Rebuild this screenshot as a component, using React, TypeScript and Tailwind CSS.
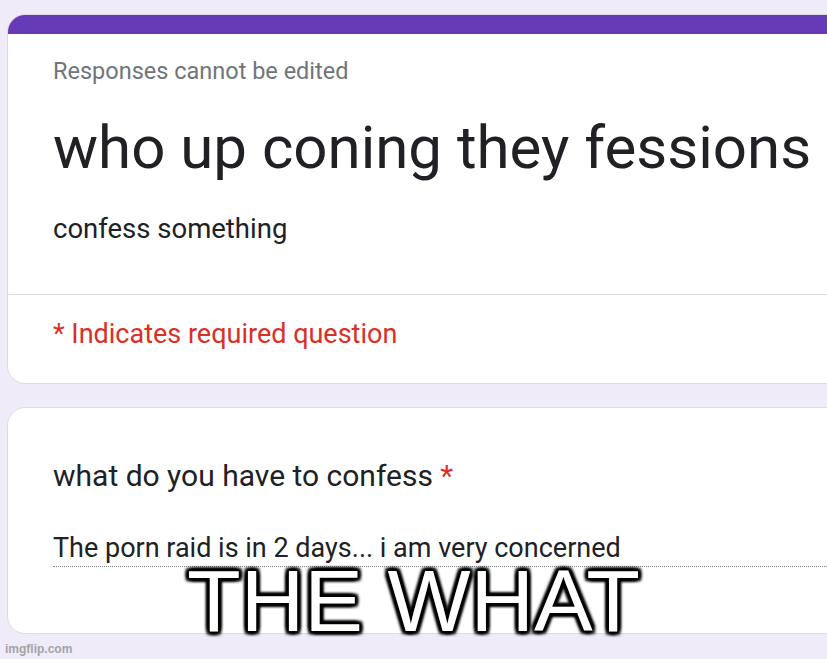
export default function App() {
  return (
    <div className="relative h-[659px] w-[827px] overflow-hidden bg-[#f0ebf8] font-['Roboto',sans-serif]">
      <div className="flex w-[860px] flex-col gap-[23px] pl-[7px] pt-[14px]">
        <div className="flex h-[370px] flex-col overflow-hidden rounded-[18px] border border-[#dadce0] bg-white">
          <div className="h-[19px] shrink-0 bg-[#673ab7]" />
          <div className="px-[45px] pt-[23px]">
            <p className="text-[23.5px] leading-[28px] text-[#70757a]">Responses cannot be edited</p>
            <h1 className="mt-[28px] whitespace-nowrap text-[60px] leading-[70px] text-[#202124]">who up coning they fessions</h1>
            <p className="mt-[30px] text-[27.5px] leading-[32px] text-[#202124]">confess something</p>
          </div>
          <div className="mt-[49px] border-t border-[#dadce0] px-[45px] pt-[23px]">
            <p className="text-[27px] leading-[32px] text-[#d93025]">* Indicates required question</p>
          </div>
        </div>

        <div className="h-[227px] rounded-[18px] border border-[#dadce0] bg-white pl-[45px] pt-[50px]">
          <p className="text-[30px] leading-[36px] text-[#202124]">
            what do you have to confess <span className="text-[#d93025]">*</span>
          </p>
          <div className="mt-[38px] border-b border-dotted border-[#80868b] pb-[2px]">
            <p className="text-[27px] leading-[32px] text-[#202124]">The porn raid is in 2 days... i am very concerned</p>
          </div>
        </div>
      </div>

      <div className="absolute left-0 right-0 top-[551px] text-center font-['Liberation_Sans',Arial,sans-serif] text-[88px] leading-[100px] text-white [text-shadow:3px_3px_3px_#000,-3px_-3px_3px_#000,3px_-3px_3px_#000,-3px_3px_3px_#000,0_3px_3px_#000,0_-3px_3px_#000,3px_0_3px_#000,-3px_0_3px_#000]">
        THE WHAT
      </div>

      <div className="absolute bottom-[3px] left-[5px] font-['Liberation_Sans',Arial,sans-serif] text-[12px] font-bold leading-[14px] text-[#a3a3a8]">
        imgflip.com
      </div>
    </div>
  )
}
